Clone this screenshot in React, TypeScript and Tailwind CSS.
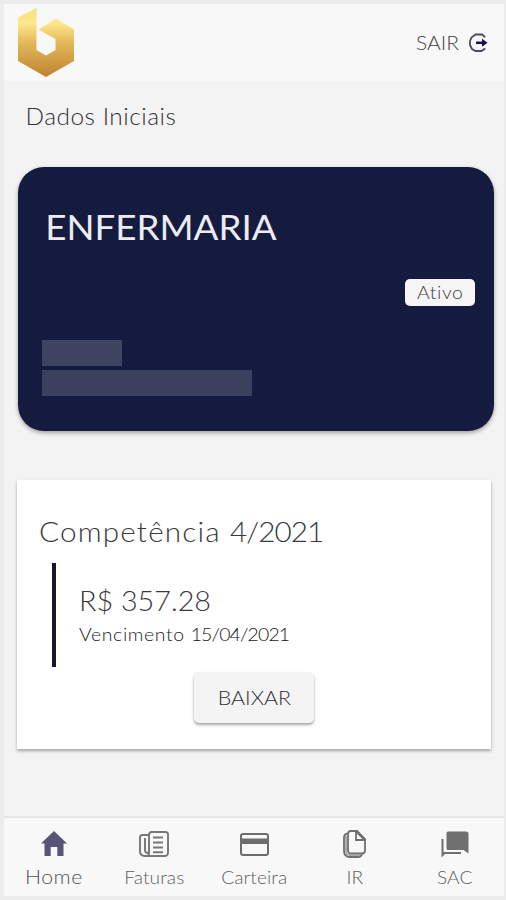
import type { ReactNode } from "react";

function BrandLogo() {
  return (
    <svg width="56" height="69" viewBox="0 0 56 69" aria-label="Logo">
      <defs>
        <linearGradient id="gold" x1="0" y1="0" x2="0" y2="1">
          <stop offset="0" stopColor="#f8df79" />
          <stop offset="0.22" stopColor="#fde88d" />
          <stop offset="0.5" stopColor="#e3b95a" />
          <stop offset="1" stopColor="#c0812f" />
        </linearGradient>
      </defs>
      <path
        fill="url(#gold)"
        d="M0 9.500 18.500 0V42L28 47.500 37.500 42V31L20.500 21.500 38 10.500 56 21.500V53L28 69 0 53Z"
      />
    </svg>
  );
}

function ExitIcon() {
  return (
    <svg width="19" height="20" viewBox="0 0 19 20" fill="none">
      <path d="M15.500 4.500V3.500L13 1.500H6.500L2.500 4.500 1 8V12L3 16 6.500 18H12.500L15.500 16V15" stroke="#4c4a5c" strokeWidth="1.800" />
      <path d="M7 9.800H14" stroke="#15134a" strokeWidth="2.500" />
      <path d="M13 5.800 18.500 9.800 13 13.800Z" fill="#15134a" />
    </svg>
  );
}

function HomeIcon() {
  return (
    <svg className="mr-[2px]" width="26" height="26" viewBox="0 0 26 26">
      <path fill="#565576" d="M13 0 26 12.500H22.500V25H16.300V16H9.700V25H3.500V12.500H0Z" />
    </svg>
  );
}

function InvoiceIcon() {
  return (
    <svg className="mr-[2px]" width="30" height="26" viewBox="0 0 30 26" fill="none" stroke="#77777a" strokeWidth="1.900">
      <path d="M10 4V22.500Q10 25 7.500 25H25.500Q29 25 29 21.500V3.500Q29 1 26.500 1H13Q10 1 10 4Z" />
      <path d="M10 4H3.500Q1 4 1 6.500V20Q1 25 6 25H8" />
      <path d="M6 7V19Q6 22 9 22M14 6.500H24M14 11.500H24M14 16.500H24M14 21.200H24" />
    </svg>
  );
}

function CardIcon() {
  return (
    <svg width="29" height="23" viewBox="0 0 29 23">
      <rect x="1" y="1" width="27" height="21" rx="2" fill="none" stroke="#6d6d6d" strokeWidth="2" />
      <path fill="#6d6d6d" d="M1 5.500H28V11H1Z" />
    </svg>
  );
}

function DocumentsIcon() {
  return (
    <svg width="23" height="28" viewBox="0 0 23 28" fill="none" stroke="#6f6f6f" strokeWidth="1.800">
      <path d="M5 4Q5 1 8 1H14L22 9V20.500Q22 23.500 19 23.500H8.500Q5 23.500 5 20Z" />
      <path d="M13 1.500V10H22L13 1.500M5 3.500Q1 4 1 7.500V21Q1 27 7 27H15Q18.500 27 19 23.500" />
      <path d="M3 6V21Q3 25 7 25H17" stroke="#a5a5a5" />
    </svg>
  );
}

function ChatIcon() {
  return (
    <svg width="28" height="27" viewBox="0 0 28 27" fill="#707070">
      <path d="M7 .5H25Q27.500.5 27.500 3V22.500L22.500 19H7Q5.500 19 5.500 17V2.500Q5.500.5 7 .5Z" />
      <path d="M.5 8H2.500V21H20V23H4L.5 26.500Z" />
    </svg>
  );
}

function Tab({ icon, children, home = false }: { icon: ReactNode; children: ReactNode; home?: boolean }) {
  return (
    <button className="flex flex-1 flex-col items-center pl-px">
      <span className="flex h-[52px] items-center justify-center">{icon}</span>
      <span
        className={
          home
            ? "mr-[2px] scale-x-[1.12] text-[19px] leading-[14px] font-light tracking-[0.500px] text-[#55555a]"
            : "scale-x-[1.060] text-[18px] leading-[14px] font-light tracking-[0.100px] text-[#5f5f62]"
        }
      >
        {children}
      </span>
    </button>
  );
}

export default function App() {
  return (
    <div className="h-[900px] w-[506px] bg-[#ececec] pt-[4px] pr-[2px] pb-[4px] pl-[4px] font-['Lato',sans-serif] text-[#38383d]">
      <div className="flex h-full flex-col bg-[#f3f3f3]">
        <header className="flex h-[77px] shrink-0 items-center justify-between bg-[#f8f8f8] pl-[14px] pr-[16px]">
          <BrandLogo />
          <button className="flex items-center gap-[10px] text-[20px] leading-5 font-light text-[#3f3f43]">
            <span className="mb-[2px] w-[46px] whitespace-nowrap">
              <span className="inline-block origin-left scale-x-[1.05]">SAIR</span>
            </span>
            <ExitIcon />
          </button>
        </header>

        <main className="flex-1 pl-[13px] pr-[10px]">
          <h1 className="w-fit origin-left scale-x-[1.06] pt-[21px] pl-[8px] text-[23px] leading-[29px] font-light tracking-[0.500px] text-[#303036]">Dados Iniciais</h1>

          <section className="mt-[36px] ml-px flex h-[264px] flex-col rounded-[26px] bg-[#151b3f] pl-[24px] pr-[19px] shadow-[0_2px_4px_rgba(0,0,0,0.350)]">
            <h2 className="w-fit origin-left scale-x-[1.08] pt-[40px] pl-[3px] text-[34px] leading-[40px] text-[#ececf0]">ENFERMARIA</h2>
            <span className="mt-[32px] flex h-[27px] w-[70px] items-center justify-center self-end rounded-[5px] bg-[#f5f5f5] text-[18.500px] leading-[27px] font-light tracking-[0.600px] text-[#3f3f43]">
              <span className="scale-x-[1.05]">Ativo</span>
            </span>
            <div className="mt-[34px] h-[26px] w-[80px] bg-[#3e4361]" />
            <div className="mt-[4px] h-[26px] w-[210px] bg-[#3b405f]" />
          </section>

          <section className="mt-[49px] mr-[3px] flex h-[269px] flex-col bg-white pl-[22px] shadow-[0_2px_3px_rgba(0,0,0,0.320)]">
            <h2 className="w-fit origin-left scale-x-[1.1] pt-[36px] text-[27px] leading-[32px] font-light">
              <span className="tracking-[1.050px]">Competência </span>
              <span className="tracking-[-0.850px]">4/2021</span>
            </h2>
            <div className="mt-[15px] ml-[13px] h-[104px] border-l-4 border-[#171728] pt-[22px] pl-[23px]">
              <p className="w-fit origin-left scale-x-[1.065] text-[27px] leading-[32px] font-light">R$ 357.28</p>
              <p className="w-fit origin-left scale-x-[1.05] pt-[6px] text-[18.500px] leading-[22px] font-light text-[#202024]">
                <span className="tracking-[0.600px]">Vencimento </span>
                <span className="tracking-[-0.800px]">15/04/2021</span>
              </p>
            </div>
            <button className="mt-[5px] ml-[155px] h-[51px] w-[120px] rounded-[5px] bg-[#f4f4f4] text-[19.500px] font-light text-[#303036] shadow-[0_2px_3px_rgba(0,0,0,0.350)]">
              <span className="inline-block scale-x-[1.1]">BAIXAR</span>
            </button>
          </section>
        </main>

        <nav className="flex h-[80px] shrink-0 border-t-2 border-[#e6e6e6] bg-[#f8f8f8]">
          <Tab icon={<HomeIcon />} home>Home</Tab>
          <Tab icon={<InvoiceIcon />}>Faturas</Tab>
          <Tab icon={<CardIcon />}>Carteira</Tab>
          <Tab icon={<DocumentsIcon />}>IR</Tab>
          <Tab icon={<ChatIcon />}>SAC</Tab>
        </nav>
      </div>
    </div>
  );
}
